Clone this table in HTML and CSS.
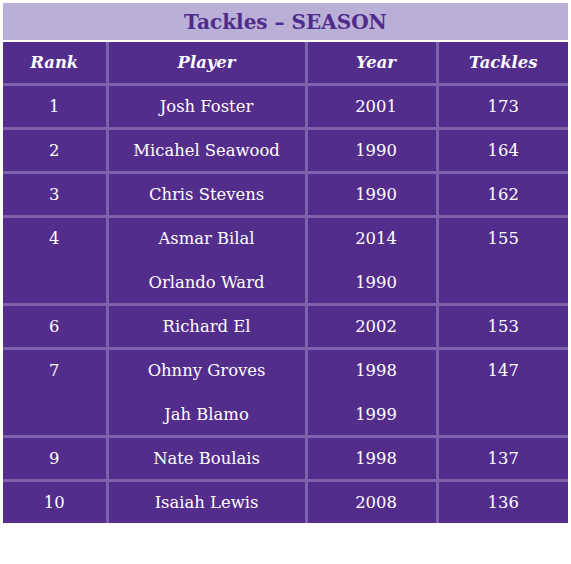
FILE: index.html
```html
<!DOCTYPE html>
<html lang="en">
<head>
    <meta charset="UTF-8">
    <title>Tackles - Season</title>
    <link rel="stylesheet" href="styles.css">
</head>
<body>
    <div class="record-box">
        <div class="record-title">Tackles – SEASON</div>
        <table class="record-table">
            <colgroup>
                <col class="col-rank">
                <col class="col-player">
                <col class="col-year">
                <col class="col-tackles">
            </colgroup>
            <thead>
                <tr>
                    <th>Rank</th>
                    <th>Player</th>
                    <th class="year">Year</th>
                    <th>Tackles</th>
                </tr>
            </thead>
            <tbody>
                <tr><td>1</td><td>Josh Foster</td><td class="year">2001</td><td>173</td></tr>
                <tr><td>2</td><td>Micahel Seawood</td><td class="year">1990</td><td>164</td></tr>
                <tr><td>3</td><td>Chris Stevens</td><td class="year">1990</td><td>162</td></tr>
                <tr>
                    <td>4</td>
                    <td><div>Asmar Bilal</div><div>Orlando Ward</div></td>
                    <td class="year"><div>2014</div><div>1990</div></td>
                    <td>155</td>
                </tr>
                <tr><td>6</td><td>Richard El</td><td class="year">2002</td><td>153</td></tr>
                <tr>
                    <td>7</td>
                    <td><div>Ohnny Groves</div><div>Jah Blamo</div></td>
                    <td class="year"><div>1998</div><div>1999</div></td>
                    <td>147</td>
                </tr>
                <tr><td>9</td><td>Nate Boulais</td><td class="year">1998</td><td>137</td></tr>
                <tr><td>10</td><td>Isaiah Lewis</td><td class="year">2008</td><td>136</td></tr>
            </tbody>
        </table>
    </div>
</body>
</html>
```

FILE: styles.css
```css
body {
    margin: 0;
    padding: 3px;
    background: #ffffff;
    font-family: "DejaVu Serif", serif;
}

.record-box {
    width: 565px;
}

.record-title {
    height: 37px;
    line-height: 38px;
    background: #bab0d7;
    color: #4f2b8b;
    text-align: center;
    font-weight: bold;
    font-size: 20px;
    margin-bottom: 2px;
}

.record-table {
    width: 565px;
    border-collapse: collapse;
    background: #532d8c;
    color: #ffffff;
    table-layout: fixed;
}

.col-rank { width: 104px; }
.col-player { width: 199px; }
.col-year { width: 131px; }
.col-tackles { width: 131px; }

.record-table th,
.record-table td {
    border: 3px solid #7d62a9;
    text-align: center;
    vertical-align: top;
    padding: 1px 0 0;
    line-height: 40px;
    font-size: 16.4px;
}

.record-table th {
    font-style: italic;
    font-weight: bold;
    border-top: none;
}

.record-table .year {
    padding-left: 9px;
}

.record-table td div + div {
    padding-top: 4px;
    line-height: 40px;
}

.record-table tr th:first-child,
.record-table tr td:first-child {
    border-left: none;
}

.record-table tr th:last-child,
.record-table tr td:last-child {
    border-right: none;
}

.record-table tbody tr:last-child td {
    border-bottom: none;
}
```
